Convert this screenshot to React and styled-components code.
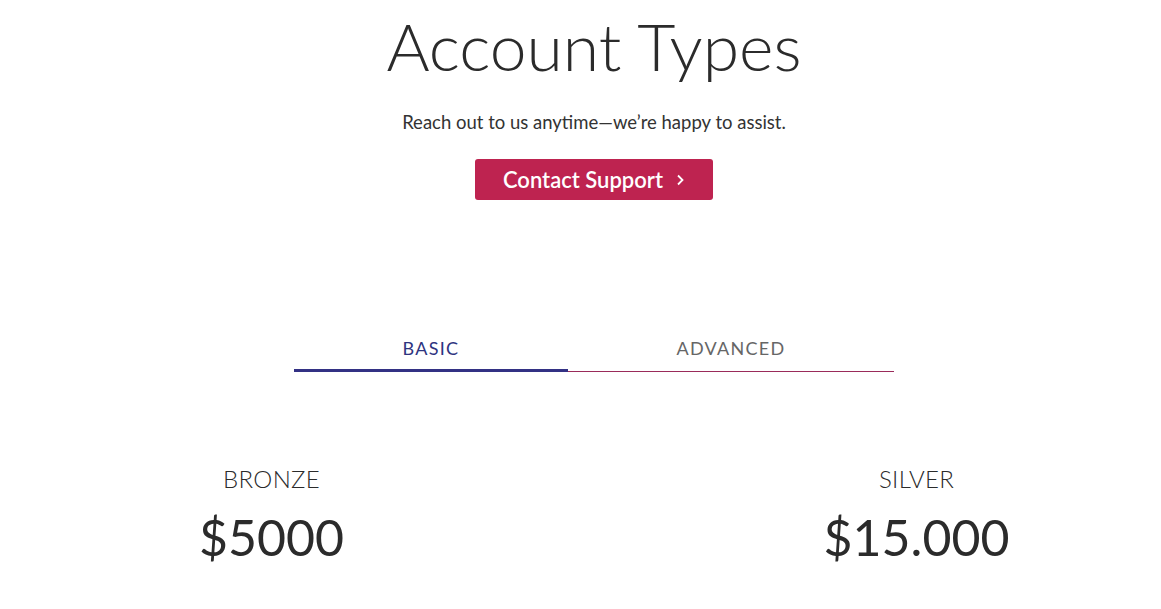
import React, { useState } from 'react';
import styled, { createGlobalStyle } from 'styled-components';

const GlobalStyle = createGlobalStyle`
  body {
    margin: 0;
    background: #fff;
    font-family: Lato, "Noto Sans", sans-serif;
    color: #2b2b2b;
  }
`;

const Page = styled.div`
  padding-left: 27px;
  display: flex;
  flex-direction: column;
  align-items: center;
`;

const Header = styled.header`
  display: flex;
  flex-direction: column;
  align-items: center;
  padding-top: 6px;
`;

const Title = styled.h1`
  margin: 0;
  font-size: 66px;
  font-weight: 300;
  line-height: 80px;
  color: #2b2b2b;
`;

const Subtitle = styled.p`
  margin: 25px 0 0;
  font-size: 18.5px;
  color: #333;
`;

const SupportButton = styled.button`
  margin-top: 26px;
  width: 238px;
  height: 41px;
  border: none;
  border-radius: 3px;
  background: #be2350;
  color: #fff;
  font-family: inherit;
  font-size: 22px;
  font-weight: 600;
  display: flex;
  align-items: center;
  justify-content: center;
  gap: 12px;
  cursor: pointer;
`;

const Tabs = styled.div`
  margin-top: 137px;
  width: 600px;
  display: flex;
  border-bottom: 1px solid #9a2b5a;
`;

const Tab = styled.button`
  flex: 1 1 auto;
  background: none;
  border: none;
  padding: 0 0 10px;
  font-family: inherit;
  font-size: 18px;
  letter-spacing: 1.3px;
  color: ${(p) => (p.$active ? '#2e3480' : '#666')};
  border-bottom: 3px solid ${(p) => (p.$active ? '#333184' : 'transparent')};
  margin-bottom: -1px;
  cursor: pointer;
`;

const Plans = styled.div`
  margin-top: 92px;
  display: grid;
  grid-template-columns: 290px 290px;
  column-gap: 355px;
`;

const Plan = styled.div`
  display: flex;
  flex-direction: column;
  align-items: center;
`;

const PlanName = styled.div`
  font-size: 24px;
  font-weight: 300;
  letter-spacing: 0.3px;
`;

const Price = styled.div`
  margin-top: 14px;
  font-size: 50px;
  font-weight: 400;
`;

const Chevron = () => (
  <svg width="10" height="14" viewBox="0 0 10 14" fill="none">
    <path d="M3 2.5 L7.5 7 L3 11.5" stroke="#fff" strokeWidth="1.8" />
  </svg>
);

const plans = [
  { name: 'BRONZE', price: '$5000' },
  { name: 'SILVER', price: '$15.000' },
];

export default function App() {
  const [tab, setTab] = useState('basic');
  return (
    <Page>
      <GlobalStyle />
      <Header>
        <Title>Account Types</Title>
        <Subtitle>Reach out to us anytime—we’re happy to assist.</Subtitle>
        <SupportButton>
          Contact Support <Chevron />
        </SupportButton>
      </Header>
      <Tabs>
        <Tab $active={tab === 'basic'} onClick={() => setTab('basic')}>BASIC</Tab>
        <Tab $active={tab === 'advanced'} onClick={() => setTab('advanced')}>ADVANCED</Tab>
      </Tabs>
      <Plans>
        {plans.map((p) => (
          <Plan key={p.name}>
            <PlanName>{p.name}</PlanName>
            <Price>{p.price}</Price>
          </Plan>
        ))}
      </Plans>
    </Page>
  );
}
